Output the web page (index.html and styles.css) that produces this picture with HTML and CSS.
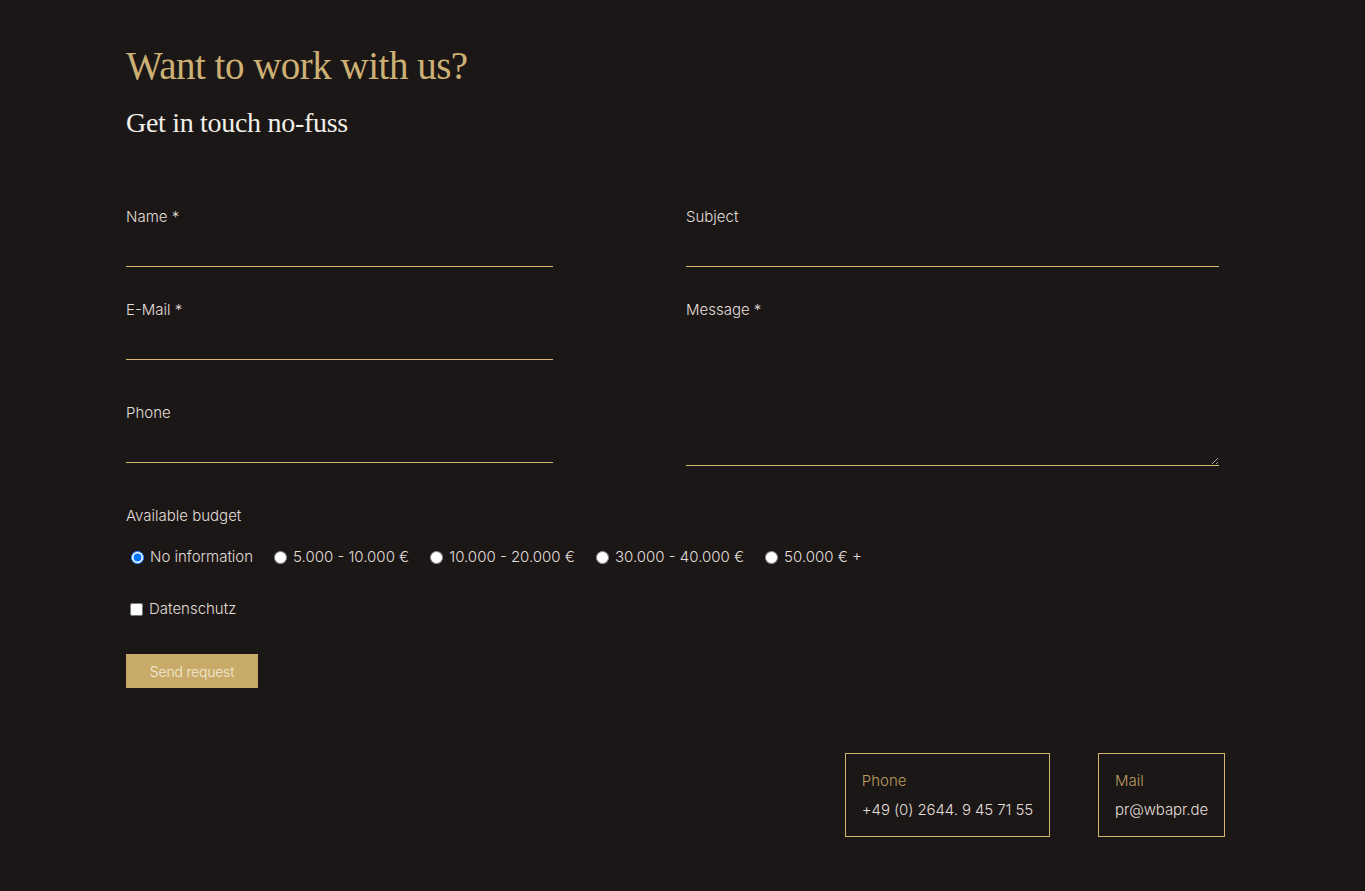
FILE: index.html
```html
<!DOCTYPE html>
<html lang="en">
<head>
<meta charset="utf-8">
<title>Contact</title>
<link rel="stylesheet" href="styles.css">
</head>
<body>
<main class="page">
  <h1 class="title">Want to work with us?</h1>
  <h2 class="subtitle">Get in touch no-fuss</h2>

  <form class="form">
    <div class="columns">
      <div class="col col-left">
        <div class="field">
          <label class="label">Name *</label>
          <input class="input" type="text">
        </div>
        <div class="field">
          <label class="label">E-Mail *</label>
          <input class="input" type="email">
        </div>
        <div class="field field-phone">
          <label class="label">Phone</label>
          <input class="input" type="tel">
        </div>
      </div>
      <div class="col col-right">
        <div class="field">
          <label class="label">Subject</label>
          <input class="input" type="text">
        </div>
        <div class="field">
          <label class="label">Message *</label>
          <textarea class="textarea"></textarea>
        </div>
      </div>
    </div>

    <div class="budget">
      <div class="label">Available budget</div>
      <div class="radios">
        <label class="radio"><input type="radio" name="b" checked> No information</label>
        <label class="radio"><input type="radio" name="b"> 5.000 - 10.000 €</label>
        <label class="radio"><input type="radio" name="b"> 10.000 - 20.000 €</label>
        <label class="radio"><input type="radio" name="b"> 30.000 - 40.000 €</label>
        <label class="radio"><input type="radio" name="b"> 50.000 € +</label>
      </div>
    </div>

    <label class="check"><input type="checkbox"> Datenschutz</label>

    <button class="btn" type="button">Send request</button>
  </form>

  <div class="contacts">
    <div class="box">
      <div class="box-label">Phone</div>
      <div class="box-value">+49 (0) 2644. 9 45 71 55</div>
    </div>
    <div class="box">
      <div class="box-label">Mail</div>
      <div class="box-value">pr@wbapr.de</div>
    </div>
  </div>
</main>
</body>
</html>
```

FILE: styles.css
```css
* { box-sizing: border-box; }
html, body { margin: 0; padding: 0; }
body {
  background: #1b1716;
  color: #e2ded8;
  font-family: "Inter", "Liberation Sans", sans-serif;
  font-weight: 300;
  font-size: 15px;
  min-height: 891px;
}
.page {
  padding: 40px 0 0 126px;
  width: 1225px;
}
.title {
  margin: 0;
  font-family: "Liberation Serif", serif;
  font-weight: 400;
  font-size: 39px;
  line-height: 52px;
  color: #cdb074;
  letter-spacing: -0.5px;
}
.subtitle {
  margin: 11px 0 0;
  font-family: "Liberation Serif", serif;
  font-weight: 400;
  font-size: 28px;
  line-height: 40px;
  color: #f2efe9;
  letter-spacing: -0.3px;
}
.form { margin-top: 63px; }
.columns {
  display: flex;
  gap: 133px;
}
.col-left { width: 427px; }
.col-right { width: 533px; }
.field { margin-bottom: 32px; }
.field-phone { padding-top: 10px; }
.label {
  display: block;
  line-height: 20px;
  font-size: 15px;
  color: #e2ded8;
  padding-top: 1px;
}
.input, .textarea {
  display: block;
  width: 100%;
  background: transparent;
  border: 0;
  border-bottom: 1px solid #d9b96c;
  color: #fff;
  outline: none;
  font: inherit;
}
.input { height: 40px; }
.textarea {
  height: 145px;
  margin-top: 1px;
  resize: vertical;
}
.budget { margin-top: 7px; }
.radios {
  display: flex;
  gap: 16px;
  margin-top: 21px;
  height: 20px;
  align-items: center;
}
.radio, .check {
  display: flex;
  align-items: center;
  gap: 6px;
  line-height: 20px;
  color: #e2ded8;
}
.radio input, .check input { margin: 0 0 0 5px; }
.check {
  margin-top: 32px;
  width: max-content;
}
.check input { margin-left: 4px; }
.btn {
  display: block;
  margin-top: 35px;
  width: 132px;
  height: 34px;
  border: 0;
  background: #c9ab69;
  color: #f5ecd9;
  font-family: "Inter", "Liberation Sans", sans-serif;
  font-weight: 300;
  font-size: 14px;
  letter-spacing: -0.2px;
  padding: 0;
}
.contacts {
  display: flex;
  justify-content: flex-end;
  gap: 48px;
  margin-top: 65px;
}
.box {
  border: 1px solid #d4b46a;
  padding: 17px 16px 17px 16px;
  height: 84px;
}
.box-label {
  color: #b99b5f;
  line-height: 20px;
  font-size: 15px;
}
.box-value {
  margin-top: 9px;
  line-height: 20px;
  font-size: 15px;
  color: #e2ded8;
  letter-spacing: -0.1px;
}
```
